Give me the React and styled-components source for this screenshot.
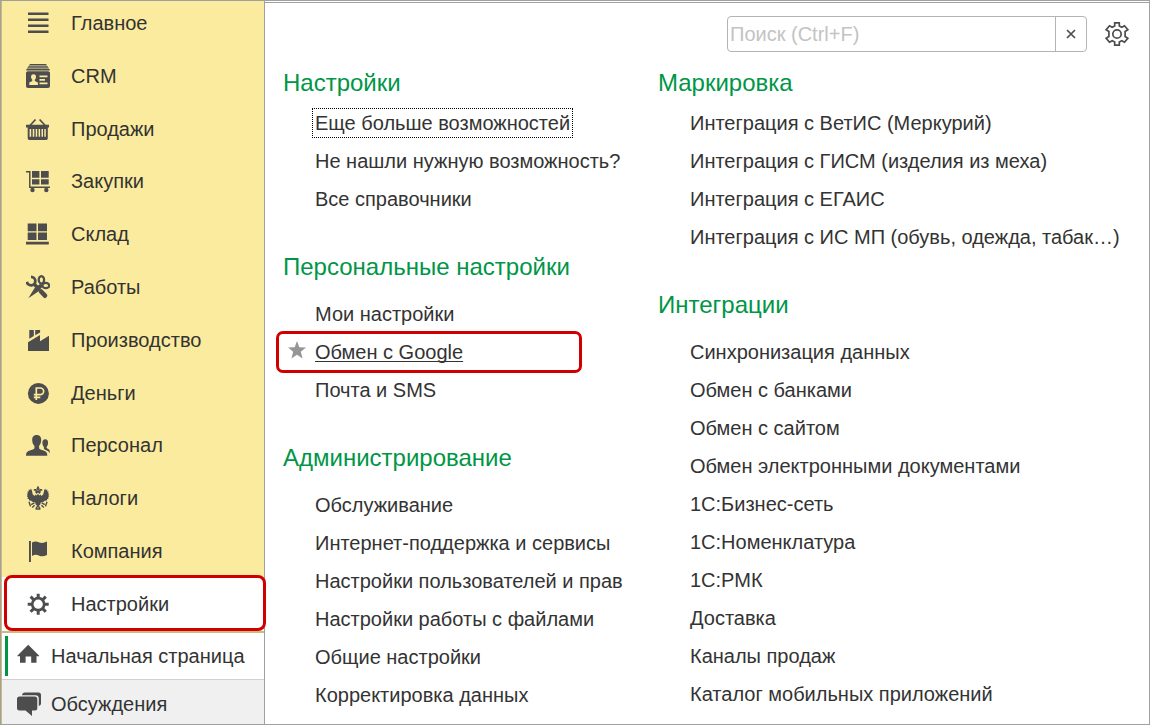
import styled, { createGlobalStyle, css } from "styled-components";

const GlobalStyle = createGlobalStyle`
  *,
  *::before,
  *::after {
    box-sizing: border-box;
  }

  body {
    margin: 0;
    background-color: #fff;
    color: #333;
    font-family: "Liberation Sans", Arial, sans-serif;
    font-size: 20px;
    line-height: 24px;
  }

  ul {
    list-style: none;
    margin: 0;
    padding: 0;
  }

  a {
    color: inherit;
    text-decoration: none;
  }
`;

const EagleHalf = () => (
  <>
    <path d="M12 6.500 10.600 8 9.300 6.400 9.400 4.800 7.300 4.400 8.200 2.900 10 3l1 1.400L12 5zM12 7.800v12.400l-2.200-1.400-.6-2.400-2.400-.3-1.600-1.300-2-.2-.3-1.400-1.500-.8.500-1.100-1.100-1.300.9-.7L.8 7.700l1.100-.3-.4-2.100 1.200.2.100-2.300 1.300 1 .8-1.600 1 2 .8 3.600L8.600 10l.9-1.600 1.200 1z" />
    <path
      d="M8.300 16.800 5.200 18.600M3 15.800l1.500 4.600M8.600 19.200l-2.400 2.200M12 19.800l-2.200 2.800M12 23H9.600"
      stroke="currentColor"
      strokeWidth="1.400"
      fill="none"
    />
  </>
);

const ICONS = {
  main: (
    <path d="M2 1.400h20.500V4H2zM2 7.400h20.500V10H2zM2 13.400h20.500V16H2zM2 19.400h20.500V22H2z" />
  ),
  crm: (
    <>
      <path d="M4 0h16l1.200 1.400H2.800zM2.400 2.200h19.200l1 1.500H1.400zM1 4.600h22l1 1.800H0z" />
      <path
        fillRule="evenodd"
        d="M1.500 7.200h21L24 8.600V22a2 2 0 0 1-2 2H2a2 2 0 0 1-2-2V8.600zM7.500 10.200c-1.800 0-2.600 1.300-2.400 3 .1 1.300.6 2 1.200 2.600V17L3.300 18.600V21h8.600v-2.400L8.800 17v-1.200c.6-.6 1.100-1.300 1.200-2.600.2-1.700-.7-3-2.500-3zM13.500 11.500v1.700h8v-1.700zM13.500 15v1.700H19V15zM13.500 18.500v1.700h8v-1.700z"
      />
    </>
  ),
  sales: (
    <>
      <path
        d="M9.500 2.500 4 8.500M13.600 2.500l5.600 6"
        stroke="currentColor"
        strokeWidth="1.700"
        fill="none"
      />
      <path
        fillRule="evenodd"
        d="M0 7.800h23v2.600h-1.200V21.500a1.500 1.500 0 0 1-1.500 1.400H3.200a1.500 1.500 0 0 1-1.500-1.400V10.400H0zM3.600 12v7.800h1.600V12zM6.700 12v7.800h1.600V12zM9.700 12v7.800h1.500V12zM12.600 12v7.800h1.500V12zM15.500 12v7.800H17V12zM18.300 12v7.800h1.500V12z"
      />
    </>
  ),
  purchases: (
    <>
      <path d="M6 2h7.400v6.800H6zM15 2h7.700v6.800H15zM6 10.200h7.400v5.200H6zM15 10.200h7.700v5.200H15z" />
      <path
        d="M0 2.700h3.800v15.600H24"
        stroke="currentColor"
        strokeWidth="1.500"
        fill="none"
      />
      <circle cx="6.500" cy="21" r="2.200" />
      <circle cx="20.300" cy="21" r="2.200" />
    </>
  ),
  stock: (
    <path d="M1.700 1.600h8.800v7.600H1.700zM12 1.600h9v7.600h-9zM1.700 10.400h8.800V18H1.700zM12 10.400h9V18h-9zM0 19.800h22.800v2.800H0z" />
  ),
  works: (
    <>
      <path
        d="M5 1.800a4.300 4.300 0 1 1-4.200 5"
        stroke="currentColor"
        strokeWidth="2.700"
        fill="none"
      />
      <path
        d="M15 16.500l4 4.200"
        stroke="currentColor"
        strokeWidth="4.600"
        strokeLinecap="round"
        fill="none"
      />
      <path
        d="M8.500 9.500l3 3"
        stroke="currentColor"
        strokeWidth="3.600"
        fill="none"
      />
      <path d="M2.300 23.300 8.600 12.900l5.800-4.200 2.500 2.500-4.300 5z" />
      <ellipse
        cx="15.400"
        cy="4.800"
        rx="2.700"
        ry="3.700"
        stroke="currentColor"
        strokeWidth="2.200"
        fill="none"
      />
      <ellipse
        cx="19.800"
        cy="10.500"
        rx="3.400"
        ry="2.700"
        stroke="currentColor"
        strokeWidth="2.200"
        fill="none"
      />
    </>
  ),
  production: (
    <path d="M3.300 2h4.500v6L3.300 10.800zM9.200 2h4.900v2.400L9.200 7.200zM2 14.200 14 7v6.300l9-5.500V23H2z" />
  ),
  money: (
    <>
      <circle cx="12.400" cy="12.400" r="10.500" />
      <path
        d="M10.300 19V7h4a3.300 3.300 0 0 1 0 6.700H7.800M7.800 16.300h6.500"
        stroke="#fbeb9e"
        strokeWidth="1.700"
        fill="none"
      />
    </>
  ),
  staff: (
    <>
      <path d="M10.700 2C7.500 2 6 4.200 6.200 7.300c.1 2.600.8 4.300 2.200 5.500v2.400c-.4 1-2.400 1.600-4.600 2.400C1.200 18.500 0 19.600 0 22.700h21.300c0-3.100-1.200-4.200-3.800-5.100-2.200-.8-4-1.400-4.400-2.400v-2.400c1.300-1.200 2-2.900 2.100-5.500C15.400 4.200 13.900 2 10.700 2z" />
      <path d="M19.300 6.200c-2 0-3.100 1.600-2.900 3.900.1 1.900.6 3 1.500 3.900v1.500c.3 1 1.200 1.400 2.400 1.800 1.400.6 2.200 1.200 3.600 2.900-.1-3.100-.6-3.700-2-4.400-.8-.4-1.200-.7-1.300-1.200v-.7c.9-.8 1.400-2 1.500-3.800.1-2.300-.9-3.900-2.800-3.900z" />
    </>
  ),
  taxes: (
    <>
      <path d="M12 0l1.200 1.200-.6 1 1.300.3L13 4.400h-2l-.9-1.900 1.300-.3-.6-1z" />
      <EagleHalf />
      <g transform="matrix(-1 0 0 1 24 0)">
        <EagleHalf />
      </g>
    </>
  ),
  company: (
    <path d="M3 2h1.900v21H3zM6 3.600c3-1.700 5-.9 7.300 0 2.700.9 4.900.3 7.700-1v13.500c-2.800 1.200-5 1.700-7.700.7-2.300-1-4.300-1.500-7.300.1z" />
  ),
  settings: (
    <>
      <circle
        cx="12.200"
        cy="12.200"
        r="6"
        stroke="currentColor"
        strokeWidth="2.700"
        fill="none"
      />
      <path
        d="M12.200 1.700v4M12.200 18.700v4M1.700 12.200h4M18.700 12.200h4M4.600 4.600l2.900 2.900M16.900 16.900l2.900 2.900M4.600 19.800l2.900-2.900M16.900 7.500l2.900-2.900"
        stroke="currentColor"
        strokeWidth="3"
        fill="none"
      />
    </>
  ),
  home: (
    <path d="M11.200.8 22.200 11.700v.6h-2.700v6.500h-5.300v-6.300H8.600v6.300H3v-6.500H.3v-.6z" />
  ),
  chat: (
    <>
      <path d="M5 3.200C5.300 1.500 6.200.6 8 .6h13.500A2.500 2.500 0 0 1 24 3.100v8.200c0 1.500-.7 2.400-2.200 2.700V6.500c0-2.100-1.200-3.300-3.300-3.300z" />
      <path d="M2.500 4.500h15.300a2.500 2.500 0 0 1 2.500 2.500v9a2.500 2.500 0 0 1-2.500 2.500H15V24l-6.500-5.500h-6A2.500 2.500 0 0 1 0 16V7a2.500 2.500 0 0 1 2.500-2.500z" />
    </>
  ),
};

const SECTIONS = [
  { icon: "main", title: "Главное" },
  { icon: "crm", title: "CRM" },
  { icon: "sales", title: "Продажи" },
  { icon: "purchases", title: "Закупки" },
  { icon: "stock", title: "Склад" },
  { icon: "works", title: "Работы" },
  { icon: "production", title: "Производство" },
  { icon: "money", title: "Деньги" },
  { icon: "staff", title: "Персонал" },
  { icon: "taxes", title: "Налоги" },
  { icon: "company", title: "Компания" },
];

const COLUMNS = [
  [
    {
      title: "Настройки",
      items: [
        { title: "Еще больше возможностей", focused: true },
        { title: "Не нашли нужную возможность?" },
        { title: "Все справочники" },
      ],
    },
    {
      title: "Персональные настройки",
      items: [
        { title: "Мои настройки" },
        { title: "Обмен с Google", marked: true },
        { title: "Почта и SMS" },
      ],
    },
    {
      title: "Администрирование",
      items: [
        { title: "Обслуживание" },
        { title: "Интернет-поддержка и сервисы" },
        { title: "Настройки пользователей и прав" },
        { title: "Настройки работы с файлами" },
        { title: "Общие настройки" },
        { title: "Корректировка данных" },
      ],
    },
  ],
  [
    {
      title: "Маркировка",
      items: [
        { title: "Интеграция с ВетИС (Меркурий)" },
        { title: "Интеграция с ГИСМ (изделия из меха)" },
        { title: "Интеграция с ЕГАИС" },
        { title: "Интеграция с ИС МП (обувь, одежда, табак…)" },
      ],
    },
    {
      title: "Интеграции",
      items: [
        { title: "Синхронизация данных" },
        { title: "Обмен с банками" },
        { title: "Обмен с сайтом" },
        { title: "Обмен электронными документами" },
        { title: "1С:Бизнес-сеть" },
        { title: "1С:Номенклатура" },
        { title: "1С:РМК" },
        { title: "Доставка" },
        { title: "Каналы продаж" },
        { title: "Каталог мобильных приложений" },
      ],
    },
  ],
];

const Icon = ({ name }) => (
  <IconStyle viewBox="0 0 24 24" aria-hidden="true">
    {ICONS[name]}
  </IconStyle>
);

const Sidebar = () => {
  return (
    <SidebarStyle>
      <SectionList>
        {SECTIONS.map(({ icon, title }) => (
          <li key={icon}>
            <SectionLink href="#">
              <Icon name={icon} />
              {title}
            </SectionLink>
          </li>
        ))}
      </SectionList>
      <CurrentSection href="#" aria-current="page">
        <Icon name="settings" />
        Настройки
      </CurrentSection>
      <TabLink href="#" $active>
        <Icon name="home" />
        Начальная страница
      </TabLink>
      <TabLink href="#">
        <Icon name="chat" />
        Обсуждения
      </TabLink>
    </SidebarStyle>
  );
};

const Toolbar = () => {
  return (
    <ToolbarStyle>
      <SearchBox>
        <SearchInput
          type="text"
          placeholder="Поиск (Ctrl+F)"
          aria-label="Поиск"
        />
        <ClearButton type="button" aria-label="Очистить">
          <svg width="10" height="10" viewBox="0 0 10 10">
            <path
              d="M1 1l8 8M9 1L1 9"
              stroke="currentColor"
              strokeWidth="1.700"
            />
          </svg>
        </ClearButton>
      </SearchBox>
      <GearButton type="button" aria-label="Настройка">
        <svg
          width="24"
          height="24"
          viewBox="0 0 24 24"
          fill="none"
          stroke="currentColor"
          strokeWidth="1.700"
        >
          <path d="M9.700.9h4.600v3l2.500 1.400 2.700-1.500 3.300 3.900-2.700 1.800v5l2.700 1.800-3.300 3.900-2.700-1.500-2.500 1.400v3H9.700v-3l-2.500-1.400-2.700 1.500-3.300-3.900 2.700-1.800v-5L1.200 7.700l3.300-3.900 2.700 1.500 2.500-1.400z" />
          <circle cx="12" cy="12" r="4.200" />
        </svg>
      </GearButton>
    </ToolbarStyle>
  );
};

const Group = ({ title, items }) => {
  return (
    <GroupStyle>
      <GroupTitle>{title}</GroupTitle>
      <ul>
        {items.map((item) => (
          <Item key={item.title} $marked={item.marked}>
            {item.marked && (
              <Star viewBox="0 0 18 18" aria-hidden="true">
                <path d="M9 0l2.300 6.200 6.700.3-5.200 4.200 1.800 6.800L9 13.700l-5.600 3.800 1.800-6.800L0 6.500l6.700-.3z" />
              </Star>
            )}
            <ItemLink href="#" $focused={item.focused} $marked={item.marked}>
              {item.title}
            </ItemLink>
          </Item>
        ))}
      </ul>
    </GroupStyle>
  );
};

export default function App() {
  return (
    <>
      <GlobalStyle />
      <Window>
        <Sidebar />
        <Main>
          <Toolbar />
          <Columns>
            {COLUMNS.map((groups, index) => (
              <div key={index}>
                {groups.map((group) => (
                  <Group key={group.title} {...group} />
                ))}
              </div>
            ))}
          </Columns>
        </Main>
      </Window>
    </>
  );
}

const Window = styled.div`
  display: flex;
  min-height: 100vh;
  border: 1px solid #a0a0a0;
`;

const SidebarStyle = styled.nav`
  display: flex;
  flex-direction: column;
  flex: 0 0 264px;
  border-left: 1px solid #cdbb7e;
  border-right: 1px solid #a0a0a0;
  background-color: #fbeb9e;
`;

const IconStyle = styled.svg`
  flex: none;
  width: 24px;
  height: 24px;
  color: #4d4d4d;
  fill: currentColor;
`;

const SectionList = styled.ul`
  display: flex;
  flex: 1;
  flex-direction: column;
  justify-content: space-between;
  padding: 10px 0 14px;
`;

const SectionLink = styled.a`
  display: flex;
  align-items: center;
  gap: 21px;
  padding-left: 24px;
`;

const CurrentSection = styled(SectionLink)`
  position: relative;
  height: 56px;
  background-color: #fff;
  border-bottom: 2px solid #cdbb7e;

  &::after {
    content: "";
    position: absolute;
    inset: -2px -2px 0 2px;
    border: 3px solid #d00000;
    border-radius: 8px;
  }
`;

const TabLink = styled.a`
  display: flex;
  align-items: center;
  gap: 10px;
  height: 44px;
  padding: 3px 0 0 15px;
  background-color: #f0f0f0;

  ${({ $active }) =>
    $active &&
    css`
      position: relative;
      height: 47px;
      padding-top: 0;
      background-color: #fff;
      border-bottom: 1px solid #d0d0d0;

      &::before {
        content: "";
        position: absolute;
        inset: 3px auto 3px 3px;
        width: 3px;
        background-color: #009646;
      }
    `}
`;

const Main = styled.main`
  flex: 1;
  min-width: 0;
  margin-top: 1px;
  border-top: 1px solid #a0a0a0;
`;

const ToolbarStyle = styled.div`
  display: flex;
  justify-content: flex-end;
  align-items: center;
  gap: 18px;
  padding: 13px 20px 0;
`;

const SearchBox = styled.div`
  display: flex;
  width: 360px;
  height: 36px;
  border: 1px solid #b4b4b4;
  border-radius: 4px;
`;

const SearchInput = styled.input`
  flex: 1;
  min-width: 0;
  padding: 0 2px;
  border: none;
  background: none;
  font: inherit;

  &::placeholder {
    color: #c3c3c3;
    opacity: 1;
  }
`;

const ClearButton = styled.button`
  display: flex;
  align-items: center;
  justify-content: center;
  width: 31px;
  padding: 0;
  border: none;
  border-left: 1px solid #b4b4b4;
  background: none;
  color: #4d4d4d;
`;

const GearButton = styled.button`
  display: flex;
  padding: 0;
  border: none;
  background: none;
  color: #4d4d4d;
`;

const Columns = styled.div`
  display: grid;
  grid-template-columns: 375fr 491fr;
  padding: 17px 0 10px 18px;
  white-space: nowrap;
`;

const GroupTitle = styled.h2`
  margin: 0 0 14px;
  color: #009646;
  font-size: 24px;
  font-weight: 400;
  line-height: 28px;
`;

const GroupStyle = styled.section`
  & + & {
    margin-top: 35px;
  }

  &:first-child ${GroupTitle} {
    margin-bottom: 7px;
  }
`;

const Item = styled.li`
  display: flex;
  align-items: center;
  height: 38px;
  padding-left: 30px;

  ${({ $marked }) =>
    $marked &&
    css`
      position: relative;

      &::before {
        content: "";
        position: absolute;
        top: -2px;
        left: -7px;
        width: 306px;
        height: 42px;
        border: 3px solid #d00000;
        border-radius: 7px;
      }
    `}
`;

const Star = styled.svg`
  position: absolute;
  top: 8px;
  left: 5px;
  width: 18px;
  height: 18px;
  fill: #969696;
`;

const ItemLink = styled.a`
  padding: 2px;
  outline: ${({ $focused }) => ($focused ? "1px dotted #000" : "none")};

  ${({ $marked }) =>
    $marked &&
    css`
      text-decoration: underline 1px;
      text-decoration-skip-ink: none;
      text-underline-offset: 2px;
    `}
`;
